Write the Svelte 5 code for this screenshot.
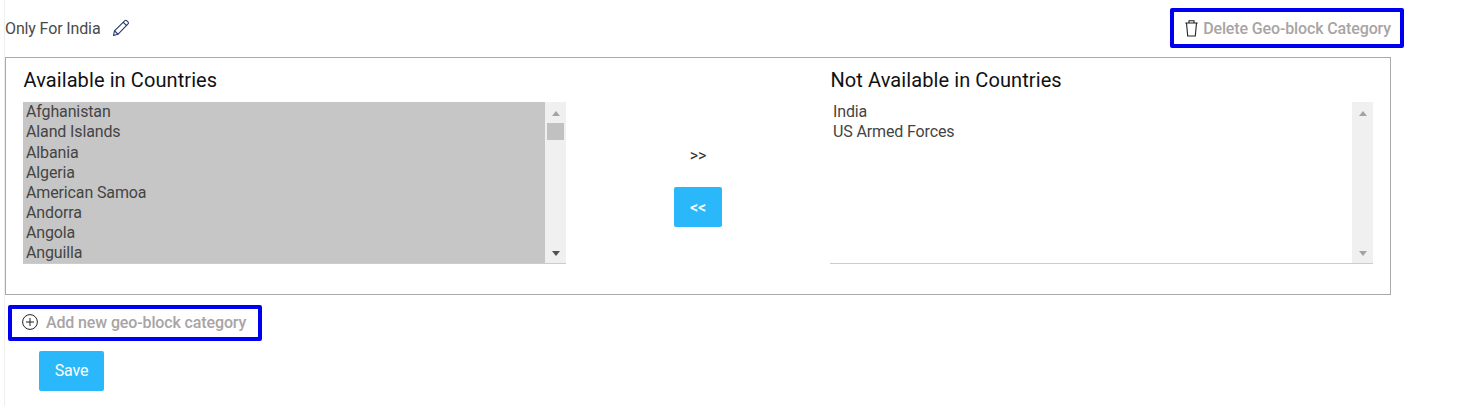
<script>
  const left = ['Afghanistan','Aland Islands','Albania','Algeria','American Samoa','Andorra','Angola','Anguilla'];
  const right = ['India','US Armed Forces'];
</script>

<div class="page">
  <header class="top">
    <div class="name">
      <span>Only For India</span>
      <svg class="pen" width="18" height="18" viewBox="0 0 18 18" fill="none" stroke="#24386e" stroke-width="1.1" stroke-linejoin="round" stroke-linecap="round">
        <path d="M1.500 16.500l1-4.600L12.600 1.900c.7-.7 1.700-.7 2.300-.1l1 1c.6.6.6 1.600-.1 2.300L5.900 15.300z"/>
        <path d="M11.300 3.300l3.200 3.200M2.600 11.800l3.200 3.200"/>
      </svg>
    </div>
    <button class="link delete marked">
      <svg width="13" height="17" viewBox="0 0 13 17" fill="none" stroke="#222" stroke-width="1.100">
        <path d="M.3 3h12.400M1.500 3l1.200 13h7.600l1.200-13M4 3V.8h5V3"/>
      </svg>
      Delete Geo-block Category
    </button>
  </header>

  <section class="box">
    <div class="col">
      <h2>Available in Countries</h2>
      <div class="list">
        <div class="items selected">
          {#each left as c}<div class="opt">{c}</div>{/each}
        </div>
        <div class="bar">
          <i class="up dark"></i>
          <b class="thumb"></b>
          <i class="down strong"></i>
        </div>
      </div>
    </div>

    <div class="mid">
      <button class="move plain">&gt;&gt;</button>
      <button class="move active">&lt;&lt;</button>
    </div>

    <div class="col">
      <h2>Not Available in Countries</h2>
      <div class="list">
        <div class="items">
          {#each right as c}<div class="opt">{c}</div>{/each}
        </div>
        <div class="bar">
          <i class="up dark"></i>
          <i class="down"></i>
        </div>
      </div>
    </div>
  </section>

  <button class="link add marked">
    <svg width="16" height="16" viewBox="0 0 16 16" fill="none" stroke="#222" stroke-width="1">
      <circle cx="8" cy="8" r="7.400"/>
      <path d="M8 4v8M4 8h8"/>
    </svg>
    Add new geo-block category
  </button>

  <button class="save">Save</button>
</div>

<style>
  :global(body) {
    margin: 0;
    background: #fff;
  }
  .page {
    margin-left: 4px;
    border-left: 1px solid #eeeeee;
    height: 406px;
    box-sizing: border-box;
    font-family: Roboto, "Liberation Sans", sans-serif;
    color: #444;
    font-size: 16px;
    letter-spacing: -0.13px;
    width: 1387px;
  }
  button {
    font-family: inherit;
    letter-spacing: inherit;
    border: 0;
    background: none;
    padding: 0;
    cursor: pointer;
  }
  .top {
    height: 57px;
    display: flex;
    align-items: center;
    justify-content: space-between;
  }
  .name {
    display: flex;
    align-items: center;
    gap: 12px;
    color: #4a4a4a;
  }
  .pen {
    margin-top: -2px;
  }
  .link {
    position: relative;
    display: flex;
    align-items: center;
    color: #a9a4a4;
    font-size: 16px;
    font-weight: 500;
  }
  .marked::after {
    content: "";
    position: absolute;
    border: 4px solid #0000f0;
    border-radius: 2px;
  }
  .delete {
    gap: 5px;
  }
  .delete::after {
    left: -15px;
    right: -13px;
    top: -11px;
    bottom: -10px;
  }
  .box {
    box-sizing: border-box;
    height: 238px;
    border: 1px solid #aaaaaa;
    padding: 0 17px;
    display: grid;
    grid-template-columns: 543px 1fr 543px;
  }
  h2 {
    margin: 0;
    padding: 12px 0 0 0.5px;
    font-size: 20px;
    font-weight: 400;
    letter-spacing: 0.09px;
    line-height: 20px;
    height: 32px;
    color: #111;
  }
  .list {
    display: flex;
    height: 162px;
    box-sizing: border-box;
  }
  .items {
    flex: 1;
    overflow: hidden;
    padding-top: 0.35px;
    border-bottom: 1px solid #cccccc;
    box-sizing: border-box;
  }
  .selected {
    background: #c6c6c6;
  }
  .opt {
    height: 20.1px;
    line-height: 20px;
    padding-left: 3px;
    white-space: nowrap;
  }
  .bar {
    width: 21px;
    background: #f0f0f0;
    border-bottom: 1px solid #cccccc;
    box-sizing: border-box;
    display: flex;
    flex-direction: column;
    align-items: center;
    padding: 9px 0 7px;
  }
  .up {
    width: 0;
    height: 0;
    border: 4.500px solid transparent;
    border-top: 0;
    border-bottom: 5px solid #a3a3a3;
  }
  .down {
    width: 0;
    height: 0;
    margin-top: auto;
    border: 4.500px solid transparent;
    border-bottom: 0;
    border-top: 5px solid #a3a3a3;
  }
  .down.strong {
    border-top-color: #505050;
  }
  .thumb {
    width: 17px;
    height: 17px;
    margin-top: 7px;
    background: #c1c1c1;
  }
  .mid {
    display: flex;
    flex-direction: column;
    align-items: center;
    padding-top: 77px;
  }
  .move {
    width: 48px;
    height: 40px;
    border-radius: 2px;
    font-size: 16px;
    font-weight: 400;
  }
  .plain {
    color: #333;
    margin-bottom: 12px;
  }
  .active {
    background: #2bb8fb;
    color: #fff;
    font-weight: 500;
  }
  .add {
    margin: 17px 0 0 17px;
    gap: 8px;
    height: 20px;
  }
  .add::after {
    left: -14px;
    right: -16px;
    top: -7px;
    bottom: -9px;
  }
  .save {
    display: block;
    margin: 19px 0 0 34px;
    width: 65px;
    height: 40px;
    padding-bottom: 2px;
    background: #2bb8fb;
    color: #fff;
    border-radius: 2px;
    font-size: 16px;
    font-weight: 400;
  }
</style>
